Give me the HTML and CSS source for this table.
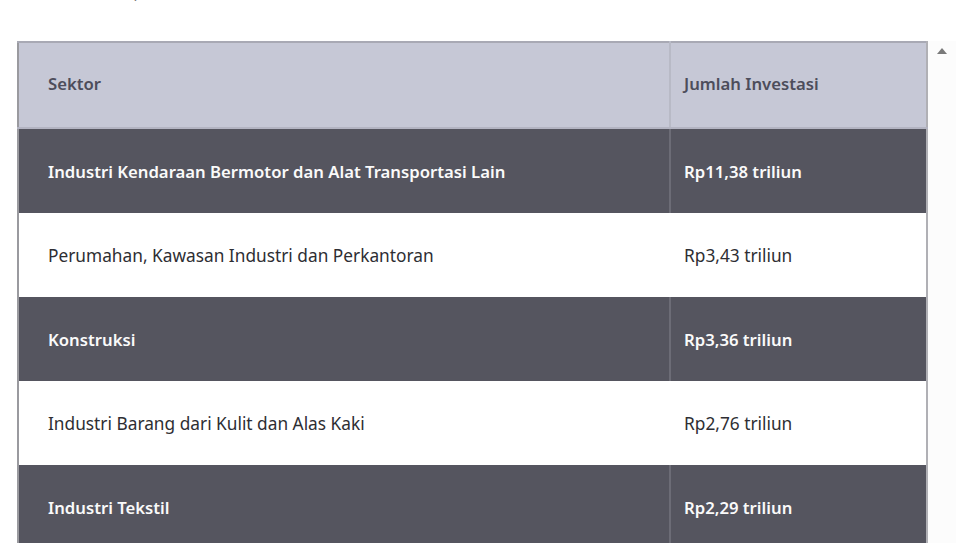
FILE: index.html
```html
<!DOCTYPE html>
<html>
<head>
<meta charset="utf-8">
<link rel="stylesheet" href="styles.css">
</head>
<body>
<div class="page">
  <p class="caption">(dalam triliun rupiah)</p>
  <div class="frame">
    <table class="invest">
      <thead>
        <tr><th class="c1">Sektor</th><th class="c2">Jumlah Investasi</th></tr>
      </thead>
      <tbody>
        <tr class="dark"><td class="c1">Industri Kendaraan Bermotor dan Alat Transportasi Lain</td><td class="c2">Rp11,38 triliun</td></tr>
        <tr class="light"><td class="c1">Perumahan, Kawasan Industri dan Perkantoran</td><td class="c2">Rp3,43 triliun</td></tr>
        <tr class="dark"><td class="c1">Konstruksi</td><td class="c2">Rp3,36 triliun</td></tr>
        <tr class="light"><td class="c1">Industri Barang dari Kulit dan Alas Kaki</td><td class="c2">Rp2,76 triliun</td></tr>
        <tr class="dark"><td class="c1">Industri Tekstil</td><td class="c2">Rp2,29 triliun</td></tr>
      </tbody>
    </table>
    <div class="scrollbar"><span class="arrow"></span></div>
  </div>
</div>
</body>
</html>
```
FILE: styles.css
```css
html, body { margin: 0; padding: 0; background: #fff; overflow: hidden; }
.page { font-family: "Noto Sans", "DejaVu Sans", sans-serif; height: 543px; overflow: hidden; padding-top: 1px; box-sizing: border-box; }
.caption { margin: -19px 0 0 20px; height: 59px; font-size: 15px; line-height: 18px; color: #777; }
.frame { display: flex; align-items: flex-start; padding-left: 17px; }
.invest { border-collapse: collapse; width: 911px; table-layout: fixed; border-left: 2px solid #9a9a9f; border-right: 2px solid #b0b0b5; border-top: 2px solid #a8a9b4; }
.invest th, .invest td { text-align: left; font-size: 16.7px; padding: 0; vertical-align: middle; }
.invest th { background: #c6c8d6; color: #4d4d5b; font-weight: 600; height: 81px; padding-bottom: 3px; border-bottom: 2px solid #b3b4c2; }
.invest .c1 { width: 621px; padding-left: 29px; }
.invest .c2 { padding-left: 13px; border-left: 2px solid #b8bac6; }
.invest tr.dark td { background: #55555f; color: #fafafa; font-weight: 600; height: 84px; }
.invest tr.dark td.c2 { border-left-color: #6c6c76; }
.invest tr.light td { background: #fff; color: #2e2e33; font-weight: 400; height: 84px; font-size: 17.3px; }
.invest tr.light td.c2 { border-left-color: #fff; }
.scrollbar { width: 28px; height: 520px; background: #fcfcfc; display: flex; justify-content: center; padding-top: 7px; }
.arrow { width: 0; height: 0; border-left: 5px solid transparent; border-right: 5px solid transparent; border-bottom: 6px solid #7a7a7a; }
```
